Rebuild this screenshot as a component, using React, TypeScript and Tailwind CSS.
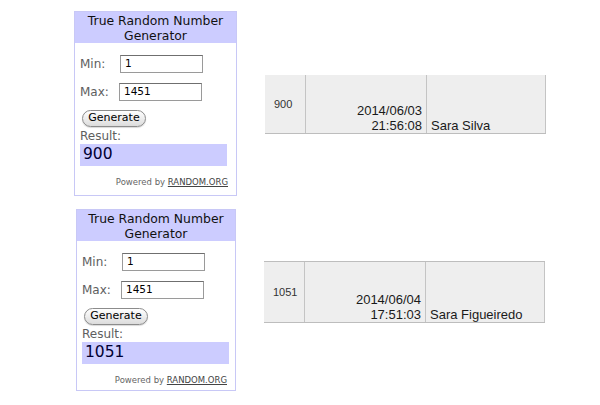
import React from "react"

const WIDGET_FONT = { fontFamily: '"DejaVu Sans", Verdana, sans-serif' }
const TABLE_FONT = { fontFamily: '"Liberation Sans", Arial, sans-serif' }

type WidgetProps = { result: string; className?: string }

const RandomWidget = ({ result, className = "w-[163px] h-[185px]" }: WidgetProps) => {
  return (
    <div
      className={`border border-[#c8c8f6] bg-white flex flex-col ${className}`}
      style={WIDGET_FONT}
    >
      <div className="h-[31px] bg-[#ccccff] flex flex-col items-center justify-center text-[12.4px] leading-[15px] text-[#111]">
        <span>True Random Number</span>
        <span>Generator</span>
      </div>

      <div className="flex flex-col px-[5px] pt-[12px]">
        {/* min / max fields */}
        <div className="flex items-center h-[18px]">
          <span className="w-[40px] text-[12px] text-[#5e5e5e]">Min:</span>
          <div className="w-[83px] h-[18px] border border-[#9a9a9a] border-t-[#6f6f6f] bg-white flex items-center pl-[4px] text-[10.5px] text-black">
            1
          </div>
        </div>
        <div className="flex items-center h-[18px] mt-[10px]">
          <span className="w-[39px] text-[12px] text-[#5e5e5e]">Max:</span>
          <div className="w-[83px] h-[18px] border border-[#9a9a9a] border-t-[#6f6f6f] bg-white flex items-center pl-[4px] text-[10.5px] text-black">
            1451
          </div>
        </div>

        <div className="mt-[9px] pl-[2px]">
          <div className="w-[64px] h-[17px] rounded-full border border-[#8c8c8c] bg-gradient-to-b from-white to-[#dcdcdc] flex items-center justify-center text-[11px] text-black shadow-[0_1px_1px_rgba(0,0,0,0.15)]">
            Generate
          </div>
        </div>

        <div className="mt-[2px] text-[12px] leading-[15px] text-[#5e5e5e]">Result:</div>
        <div className="w-[147px] h-[22px] bg-[#ccccff] flex items-center pl-[3px] text-[15.5px] text-[#000033]">
          {result}
        </div>

        <div className="mt-[10px] pr-[3px] flex justify-end text-[8.5px] text-[#666]">
          <span>
            Powered by <span className="underline text-[#444]">RANDOM.ORG</span>
          </span>
        </div>
      </div>
    </div>
  )
}

type RowProps = { number: string; date: string; time: string; name: string; className?: string }

const DrawRow = ({ number, date, time, name, className = "" }: RowProps) => {
  return (
    <div className={`flex bg-[#eeeeee] border-b border-[#bdbdbd] ${className}`} style={TABLE_FONT}>
      <div className="w-[40px] flex items-center pl-[9px] text-[11px] text-[#333]">{number}</div>
      <div className="w-[121px] border-l border-[#c4c4c4] flex flex-col justify-end items-end pr-[4px] text-[13px] leading-[15px] text-[#1a1a1a]">
        <span>{date}</span>
        <span>{time}</span>
      </div>
      <div className="w-[120px] border-l border-r border-[#c4c4c4] flex items-end pl-[4px] text-[13px] leading-[15px] text-[#1a1a1a]">
        {name}
      </div>
    </div>
  )
}

export default function App() {
  return (
    <div className="w-[600px] h-[405px] bg-white overflow-hidden">
      <div className="flex flex-col pl-[74px] pt-[11px]">
        <div className="flex items-start">
          <RandomWidget result="900" />
          <DrawRow
            className="ml-[28px] mt-[64px] h-[59px]"
            number="900"
            date="2014/06/03"
            time="21:56:08"
            name="Sara Silva"
          />
        </div>

        <div className="flex items-start mt-[13px]">
          <RandomWidget result="1051" className="ml-[2px] w-[160px] h-[182px]" />
          <DrawRow
            className="ml-[28px] mt-[52px] h-[62px] border-t"
            number="1051"
            date="2014/06/04"
            time="17:51:03"
            name="Sara Figueiredo"
          />
        </div>
      </div>
    </div>
  )
}
